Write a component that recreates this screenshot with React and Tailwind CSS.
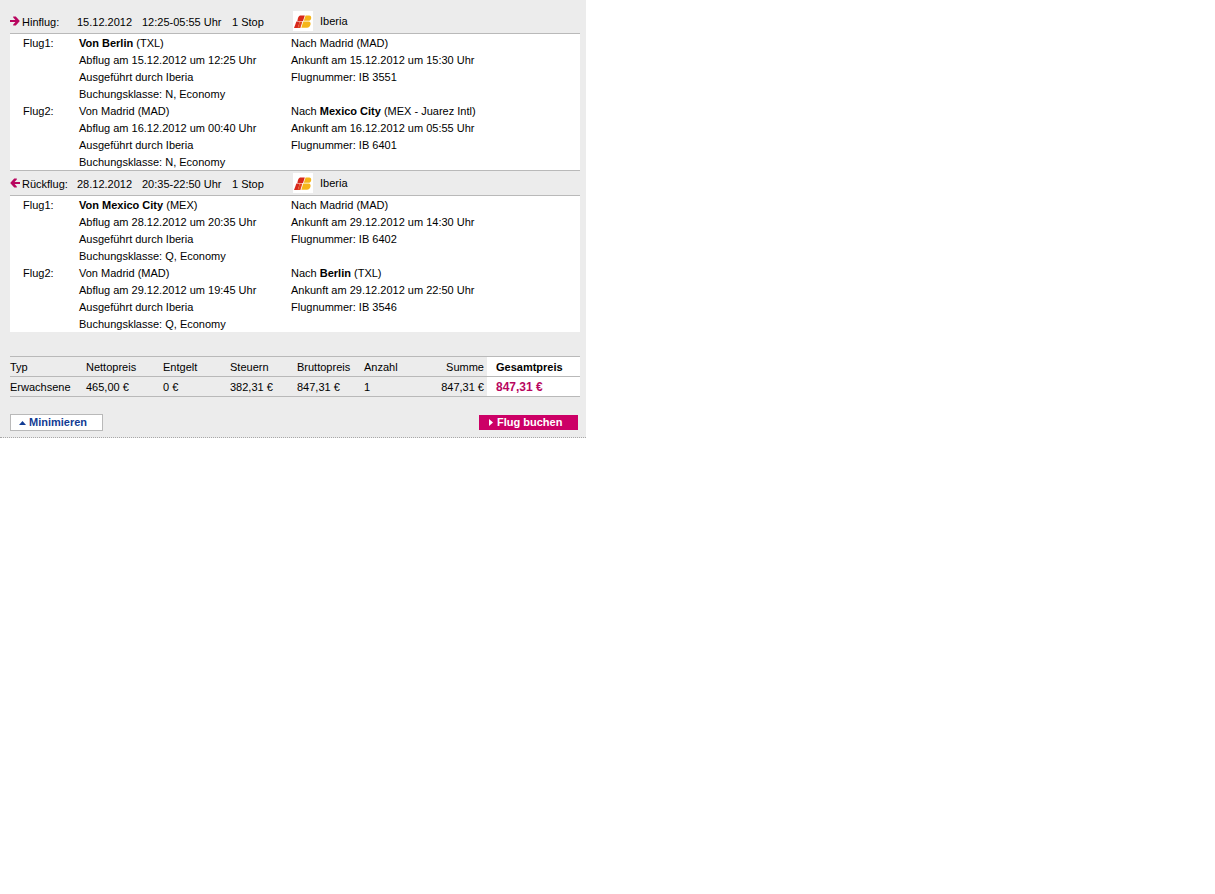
import { Fragment } from 'react';

const flights = [
  {
    label: 'Hinflug:',
    direction: 'out',
    date: '15.12.2012',
    time: '12:25-05:55 Uhr',
    stops: '1 Stop',
    airline: 'Iberia',
    legs: [
      {
        label: 'Flug1:',
        from: <><b>Von Berlin</b> (TXL)</>,
        to: <>Nach Madrid (MAD)</>,
        departure: 'Abflug am 15.12.2012 um 12:25 Uhr',
        arrival: 'Ankunft am 15.12.2012 um 15:30 Uhr',
        number: 'IB 3551',
        bookingClass: 'N, Economy',
      },
      {
        label: 'Flug2:',
        from: <>Von Madrid (MAD)</>,
        to: <>Nach <b>Mexico City</b> (MEX - Juarez Intl)</>,
        departure: 'Abflug am 16.12.2012 um 00:40 Uhr',
        arrival: 'Ankunft am 16.12.2012 um 05:55 Uhr',
        number: 'IB 6401',
        bookingClass: 'N, Economy',
      },
    ],
  },
  {
    label: 'Rückflug:',
    direction: 'back',
    date: '28.12.2012',
    time: '20:35-22:50 Uhr',
    stops: '1 Stop',
    airline: 'Iberia',
    legs: [
      {
        label: 'Flug1:',
        from: <><b>Von Mexico City</b> (MEX)</>,
        to: <>Nach Madrid (MAD)</>,
        departure: 'Abflug am 28.12.2012 um 20:35 Uhr',
        arrival: 'Ankunft am 29.12.2012 um 14:30 Uhr',
        number: 'IB 6402',
        bookingClass: 'Q, Economy',
      },
      {
        label: 'Flug2:',
        from: <>Von Madrid (MAD)</>,
        to: <>Nach <b>Berlin</b> (TXL)</>,
        departure: 'Abflug am 29.12.2012 um 19:45 Uhr',
        arrival: 'Ankunft am 29.12.2012 um 22:50 Uhr',
        number: 'IB 3546',
        bookingClass: 'Q, Economy',
      },
    ],
  },
];

function Arrow({ direction }) {
  return (
    <svg
      viewBox="0 0 10 10"
      className={`w-[10px] h-[10px] shrink-0 ${direction === 'back' ? 'rotate-180 -mt-[2px]' : '-mt-[2px]'}`}
      fill="#b8065f"
    >
      <path d="M0 4h5.4L3.2 1.6V.4h2.6L9.8 5 5.8 9.6H3.2V8.4L5.4 6H0z" />
    </svg>
  );
}

function IberiaLogo() {
  return (
    <svg viewBox="0 0 20 20" className="w-[20px] h-[20px] shrink-0 bg-white">
      <path d="M7 4.4h4.8L10 10H4.4c.2-2.8 1-4.8 2.6-5.6z" fill="#d8281c" />
      <path d="M3.4 10.6h3.4L4.8 17H1z" fill="#d8281c" />
      <path d="M6.8 10.6h2.6L7.4 17H4.8z" fill="#e0451c" />
      <path d="M12.6 4.4h3.6c3 0 2.6 5.4-.8 5.4h-4.6z" fill="#f5b51a" />
      <path d="M10.3 10.6h5.3c3.4 0 2.2 6.2-1.6 6.2H8.3z" fill="#f5b51a" />
    </svg>
  );
}

function FlightSection({ flight }) {
  return (
    <section>
      <div className="flex items-center h-6 border-b border-[#b9b9b9] box-content">
        <div className="flex items-center pt-[2px] w-[283px]">
          <div className="flex items-center gap-[2px] w-[67px]">
            <Arrow direction={flight.direction} />
            <span>{flight.label}</span>
          </div>
          <span className="w-[65px]">{flight.date}</span>
          <span className="w-[90px]">{flight.time}</span>
          <span>{flight.stops}</span>
        </div>
        <IberiaLogo />
        <span className="ml-[7px]">{flight.airline}</span>
      </div>

      <div className="grid grid-cols-[56px_212px_1fr] bg-white pl-[13px] leading-[16px] [&_p]:pt-px">
        {flight.legs.map((leg) => (
          <Fragment key={leg.label}>
            <p>{leg.label}</p>
            <div>
              <p>{leg.from}</p>
              <p>{leg.departure}</p>
              <p>Ausgeführt durch Iberia</p>
              <p>Buchungsklasse: {leg.bookingClass}</p>
            </div>
            <div>
              <p>{leg.to}</p>
              <p>{leg.arrival}</p>
              <p>Flugnummer: {leg.number}</p>
            </div>
          </Fragment>
        ))}
      </div>
    </section>
  );
}

function PriceTable() {
  return (
    <table className="w-full table-fixed mt-6 border-separate border-spacing-0 border-t border-[#b9b9b9] text-left leading-[17px] [&_td]:border-b [&_th]:border-b [&_td]:border-[#b9b9b9] [&_th]:border-[#b9b9b9] [&_th]:font-normal [&_td]:pt-[2px] [&_th]:pt-[2px]">
      <colgroup>
        <col className="w-[76px]" />
        <col className="w-[77px]" />
        <col className="w-[67px]" />
        <col className="w-[67px]" />
        <col className="w-[67px]" />
        <col className="w-[55px]" />
        <col />
        <col className="w-[93px]" />
      </colgroup>
      <thead>
        <tr>
          <th>Typ</th>
          <th>Nettopreis</th>
          <th>Entgelt</th>
          <th>Steuern</th>
          <th>Bruttopreis</th>
          <th>Anzahl</th>
          <th className="text-right pr-[3px]">Summe</th>
          <th className="bg-white pl-[9px]"><b>Gesamtpreis</b></th>
        </tr>
      </thead>
      <tbody>
        <tr>
          <td>Erwachsene</td>
          <td>465,00 €</td>
          <td>0 €</td>
          <td>382,31 €</td>
          <td>847,31 €</td>
          <td>1</td>
          <td className="text-right pr-[3px]">847,31 €</td>
          <td className="bg-white pl-[9px] text-[12px] font-bold text-[#b8065f]">847,31 €</td>
        </tr>
      </tbody>
    </table>
  );
}

function App() {
  return (
    <main className="min-h-screen bg-white font-['Liberation_Sans',Arial,sans-serif] text-[11px] text-black">
      <div className="w-full max-w-[586px] bg-[#ececec] pt-[9px] pl-[10px] pr-[6px] pb-[6px] border-b border-dotted border-[#a8a8a8]">
        <div className="divide-y divide-[#b9b9b9]">
          {flights.map((flight) => (
            <FlightSection key={flight.label} flight={flight} />
          ))}
        </div>

        <PriceTable />

        <div className="flex items-center justify-between mt-[17px] pr-[2px] leading-[15px] font-bold">
          <button
            type="button"
            className="flex items-center gap-[3px] w-[93px] pl-2 bg-white border border-[#b9b9b9] text-[#123c94]"
          >
            <svg viewBox="0 0 7 4" className="w-[7px] h-[4px]" fill="#123c94">
              <path d="M0 4L3.5 0 7 4z" />
            </svg>
            Minimieren
          </button>
          <button
            type="button"
            className="flex items-center gap-1 w-[99px] pl-[10px] bg-[#cc0066] text-white"
          >
            <svg viewBox="0 0 4 7" className="w-[4px] h-[7px]" fill="#fff">
              <path d="M0 0l4 3.5L0 7z" />
            </svg>
            Flug buchen
          </button>
        </div>
      </div>
    </main>
  );
}

export default App;
